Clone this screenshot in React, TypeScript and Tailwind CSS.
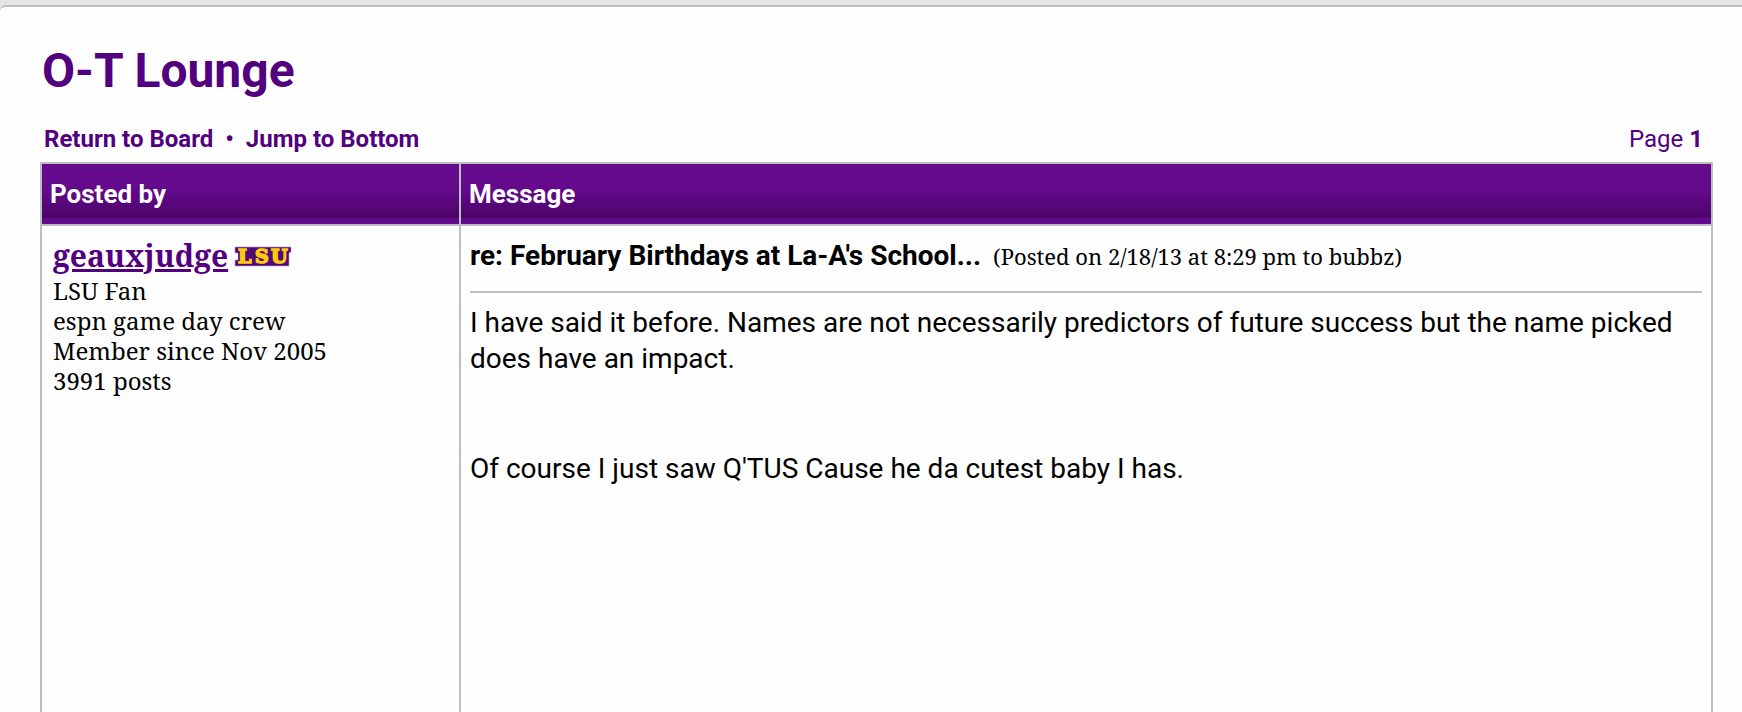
import type { ReactNode } from 'react';

type Post = {
    id: number;
    author: string;
    details: string[];
    title: string;
    posted: string;
    paragraphs: string[];
};

const posts: Post[] = [
    {
        id: 1,
        author: 'geauxjudge',
        details: [
            'LSU Fan',
            'espn game day crew',
            'Member since Nov 2005',
            '3991 posts',
        ],
        title: "re: February Birthdays at La-A's School...",
        posted: '(Posted on 2/18/13 at 8:29 pm to bubbz)',
        paragraphs: [
            'I have said it before. Names are not necessarily predictors of future success but the name picked does have an impact.',
            "Of course I just saw Q'TUS Cause he da cutest baby I has.",
        ],
    },
];

const SERIF =
    "font-['Noto_Serif','Droid_Serif','DejaVu_Serif_Condensed','DejaVu_Serif',serif]";

const LsuLogo = () => (
    <svg
        aria-label="LSU"
        className="ml-[7px] h-5 w-14 overflow-visible"
        role="img"
        viewBox="0 0 56 20"
    >
        <path
            d="M0 1H56V6L54 7V20H0V14H3V7H0Z"
            fill="#4f0a78"
            stroke="#b9a0cc"
            strokeWidth="0.6"
        />
        <text
            className="font-['DejaVu_Serif',serif] font-bold"
            fill="#fdc80f"
            fontSize="19"
            stroke="#fdc80f"
            strokeWidth="1.6"
            x="3 20 36"
            y="17"
        >
            LSU
        </text>
    </svg>
);

const HeadCell = ({
    className,
    children,
}: {
    className?: string;
    children: ReactNode;
}) => (
    <th
        className={`h-[62px] border-2 border-[#bebebe] bg-linear-to-b from-[#640a8c] from-40% to-[#480363] px-2 text-left text-[26px] font-bold text-white shadow-[inset_0_-6px_0_#640a8c] ${className ?? ''}`}
        scope="col"
    >
        {children}
    </th>
);

const PostRow = ({ post }: { post: Post }) => (
    <tr className="align-top">
        <td
            className={`border-x-2 border-[#bebebe] px-[11px] pt-2.5 text-[24px] leading-[30px] ${SERIF}`}
        >
            <div className="flex h-10 items-center">
                <a
                    className="text-[30px] leading-[40px] font-bold text-[#520080] underline"
                    href="#profile"
                >
                    {post.author}
                </a>
                <LsuLogo />
            </div>
            {post.details.map((line) => (
                <div key={line}>{line}</div>
            ))}
        </td>
        <td className="border-x-2 border-[#bebebe] px-[9px] pt-3">
            <div className="flex h-[55px] items-baseline gap-3 border-b-2 border-[#bebebe] leading-[36px]">
                <h2 className="text-[28px] font-bold">{post.title}</h2>
                <span className={`text-[22px] ${SERIF}`}>{post.posted}</span>
            </div>
            <div className="flex flex-col gap-[74px] pt-3 text-[28px] leading-[36px]">
                {post.paragraphs.map((text) => (
                    <p key={text}>{text}</p>
                ))}
            </div>
        </td>
    </tr>
);

const App = () => {
    return (
        <div className="flex min-h-screen flex-col bg-[#e6e6e6] pt-[5px] font-['Roboto',sans-serif] text-black">
            <main className="flex grow flex-col rounded-tl-md border-t-2 border-[#bebebe] bg-[#fefefe] pr-[29px] pl-10">
                <h1 className="pt-9 pl-0.5 text-[48px] leading-[56px] font-bold text-[#520080]">
                    O-T Lounge
                </h1>
                <div className="flex justify-between pt-[25px] pr-2.5 pb-[7px] pl-1 text-[24px] leading-[31px] text-[#520080]">
                    <nav className="flex gap-3 font-bold">
                        <a href="#board">Return to Board</a>
                        <span>•</span>
                        <a href="#bottom">Jump to Bottom</a>
                    </nav>
                    <div>
                        Page <b>1</b>
                    </div>
                </div>
                <table className="w-full grow border-collapse">
                    <thead>
                        <tr>
                            <HeadCell className="w-[419px]">Posted by</HeadCell>
                            <HeadCell>Message</HeadCell>
                        </tr>
                    </thead>
                    <tbody>
                        {posts.map((post) => (
                            <PostRow key={post.id} post={post} />
                        ))}
                    </tbody>
                </table>
            </main>
        </div>
    );
};

export default App;
